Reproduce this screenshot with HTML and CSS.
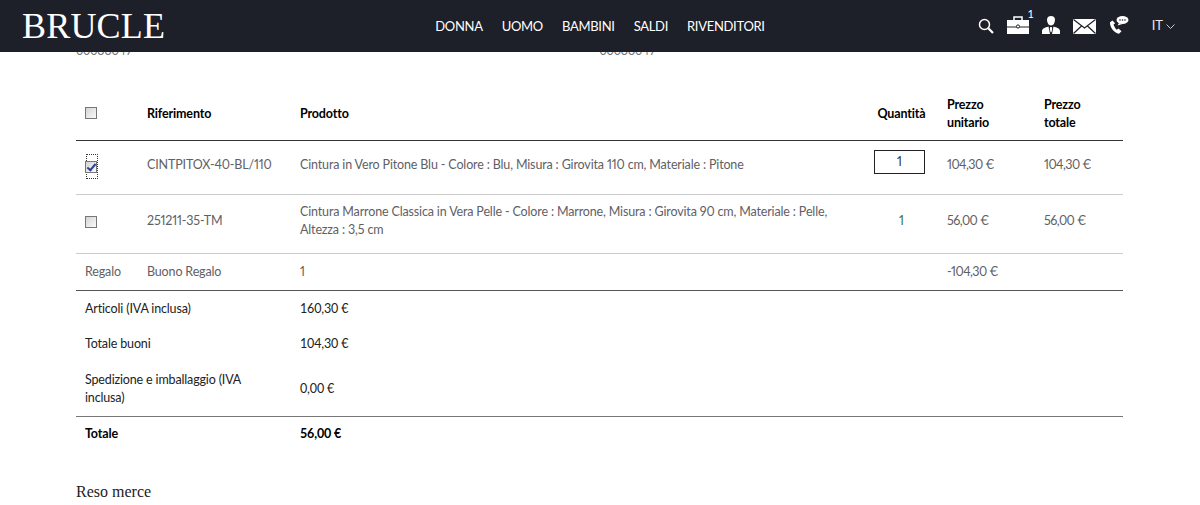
FILE: index.html
```html
<!DOCTYPE html>
<html lang="it">
<head>
    <meta charset="UTF-8">
    <title>Brucle - Ordine</title>
    <link rel="stylesheet" href="styles.css">
</head>
<body>

    <div class="header">
        <a class="logo">BRUCLE</a>
        <div class="nav">
            <a>DONNA</a>
            <a>UOMO</a>
            <a>BAMBINI</a>
            <a>SALDI</a>
            <a>RIVENDITORI</a>
        </div>
        <div class="tools">
            <svg width="16" height="16" viewBox="0 0 16 16"><circle cx="6.5" cy="6.500" r="5" fill="none" stroke="#fff" stroke-width="1.5"/><path d="M10.300 10.300L15 15" stroke="#fff" stroke-width="2.200"/></svg>
            <div class="bag">
                <svg width="22" height="18" viewBox="0 0 22 18"><path d="M7 4V1h8v3" fill="none" stroke="#fff" stroke-width="1.500"/><path d="M0 4h22v6.500H0zM0 11.500h22V18H0z" fill="#fff"/><circle cx="11" cy="10.500" r="1.600" fill="#fff" stroke="#1e2029"/></svg>
                <span class="count">1</span>
            </div>
            <svg width="18" height="18" viewBox="0 0 18 18"><path d="M5 3.500C5 1 7 0 9 0s4 1 4 3.500c0 3-1.500 6-4 6s-4-3-4-6z" fill="#fff"/><path d="M0 18v-3c0-2.500 3-3.500 6.500-4.500L8 18zM18 18v-3c0-2.500-3-3.500-6.500-4.500L10 18zM8.200 11h1.600l.4 1.500-.5 3-.7 1-.7-1-.5-3z" fill="#fff"/></svg>
            <svg width="23" height="15" viewBox="0 0 23 15"><path d="M0 0h23v15H0z" fill="#fff"/><path d="M.5 .6L11.500 9 22.500 .6M.5 14.500L8.500 7M22.500 14.500L14.500 7" fill="none" stroke="#1e2029" stroke-width="1.200"/></svg>
            <svg width="20" height="18" viewBox="0 0 20 18"><path d="M3.500 4.500L1 6.200c-.5 4.500 4 10.800 9 11.500l2.500-2.500-3-2.700-1.800 1.200C6 12 5 10.200 4.500 8.500L6.200 7.300z" fill="#fff"/><ellipse cx="13.500" cy="4" rx="6" ry="4" fill="#fff"/><path d="M10 7l-1.500 2.500L13.500 8z" fill="#fff"/><circle cx="11" cy="4" r=".8" fill="#1e2029"/><circle cx="13.500" cy="4" r=".8" fill="#1e2029"/><circle cx="16" cy="4" r=".8" fill="#1e2029"/></svg>
            <div class="lang">IT <svg width="9" height="5" viewBox="0 0 9 5"><path d="M.5 .5L4.500 4.500 8.500 .5" fill="none" stroke="#ccc"/></svg></div>
        </div>
    </div>

    <div class="container">
        <div class="addresses">
            <div>00033047</div>
            <div>00033047</div>
        </div>

        <table class="order">
            <thead>
                <tr>
                    <th class="col-check"><input type="checkbox"></th>
                    <th class="col-ref">Riferimento</th>
                    <th class="col-prod">Prodotto</th>
                    <th class="col-qty center">Quantità</th>
                    <th class="col-price">Prezzo unitario</th>
                    <th class="col-total">Prezzo totale</th>
                </tr>
            </thead>
            <tbody class="items">
                <tr class="row-one">
                    <td><span class="focus"><input type="checkbox" checked></span></td>
                    <td>CINTPITOX-40-BL/110</td>
                    <td>Cintura in Vero Pitone Blu - Colore : Blu, Misura : Girovita 110 cm, Materiale : Pitone</td>
                    <td><div class="qty-box">1</div></td>
                    <td class="price">104,30 €</td>
                    <td class="price">104,30 €</td>
                </tr>
                <tr class="row-two">
                    <td><input type="checkbox"></td>
                    <td>251211-35-TM</td>
                    <td><div class="prod-text">Cintura Marrone Classica in Vera Pelle - Colore : Marrone, Misura : Girovita 90 cm, Materiale : Pelle, Altezza : 3,5 cm</div></td>
                    <td class="center green">1</td>
                    <td class="price">56,00 €</td>
                    <td class="price">56,00 €</td>
                </tr>
                <tr class="row-gift">
                    <td>Regalo</td>
                    <td>Buono Regalo</td>
                    <td>1</td>
                    <td></td>
                    <td class="price">-104,30 €</td>
                    <td></td>
                </tr>
            </tbody>
            <tbody class="summary">
                <tr>
                    <td colspan="2">Articoli (IVA inclusa)</td>
                    <td colspan="4">160,30 €</td>
                </tr>
                <tr>
                    <td colspan="2">Totale buoni</td>
                    <td colspan="4">104,30 €</td>
                </tr>
                <tr class="sum-ship">
                    <td colspan="2"><div class="ship-label">Spedizione e imballaggio (IVA inclusa)</div></td>
                    <td colspan="4">0,00 €</td>
                </tr>
                <tr class="sum-total">
                    <td colspan="2">Totale</td>
                    <td colspan="4">56,00 €</td>
                </tr>
            </tbody>
        </table>

        <h3 class="returns">Reso merce</h3>
    </div>

</body>
</html>
```

FILE: styles.css
```css
body {
    font-family: Lato, sans-serif;
    font-size: 12.5px;
    letter-spacing: -0.15px;
    line-height: 18px;
    color: #5f6065;
    background-color: #fff;
    margin: 0;
    padding: 0;
    overflow: hidden;
}

.header {
    position: fixed;
    top: 0;
    left: 0;
    right: 0;
    height: 52px;
    background-color: #1e2029;
    color: #fff;
    display: grid;
    grid-template-columns: 1fr auto 1fr;
    align-items: center;
}

.logo {
    font-family: "Liberation Serif", serif;
    font-size: 36px;
    letter-spacing: 0.2px;
    padding-left: 22px;
}

.nav {
    display: flex;
    gap: 19px;
    font-size: 13px;
    letter-spacing: -0.3px;
}

.tools {
    display: flex;
    justify-content: flex-end;
    align-items: flex-end;
    gap: 13px;
    padding: 16px 25px 0 0;
    height: 18px;
    align-self: start;
}

.bag {
    position: relative;
    height: 18px;
}

.bag svg {
    display: block;
}

.count {
    position: absolute;
    top: -11px;
    right: -5px;
    font-size: 11px;
}

.lang {
    font-size: 13px;
    letter-spacing: 0;
    margin-left: 10px;
    color: #e8e8e8;
}

.lang svg {
    vertical-align: 1px;
}

.container {
    width: 1047px;
    margin-left: 76px;
    padding-top: 42px;
}

.addresses {
    display: flex;
}

.addresses div {
    width: 524px;
    color: #777;
}

.order {
    width: 100%;
    border-collapse: collapse;
    table-layout: fixed;
    margin-top: 29px;
}

.col-check { width: 62px; }
.col-ref { width: 153px; }
.col-prod { width: 578px; }
.col-qty { width: 69px; }
.col-price { width: 97px; }
.col-total { width: 88px; }

th, td {
    box-sizing: border-box;
    padding: 0 9px;
    text-align: left;
    font-weight: 400;
}

th {
    height: 51px;
    color: #000;
    font-weight: 700;
    border-bottom: 1px solid #333;
}

th input[type="checkbox"] {
    margin-bottom: 2px;
}

.center,
th.center {
    text-align: center;
    padding-left: 0;
    padding-right: 4px;
}

.items {
    font-variant-numeric: proportional-nums;
}

.price {
    letter-spacing: -0.55px;
}

.row-one td {
    height: 54px;
    padding-bottom: 4px;
    border-bottom: 1px solid #ccc;
}

.row-two td {
    height: 59px;
    padding-bottom: 6px;
    border-bottom: 1px solid #ccc;
}

.row-two input[type="checkbox"] {
    margin-top: 2px;
}

.row-gift td {
    height: 37px;
    border-bottom: 1px solid #555;
}

.prod-text {
    width: 535px;
}

.green {
    color: #3c7040;
}

.row-one .qty-box {
    box-sizing: content-box;
    width: 49px;
    height: 22px;
    line-height: 22px;
    margin: 0 0 6px -4px;
    border: 1px solid #222;
    color: #333;
    text-align: center;
}

.summary td {
    height: 35px;
    padding-top: 2px;
    color: #222;
}

.ship-label {
    width: 180px;
}

.summary .sum-ship td {
    height: 56px;
}

.summary .sum-total td {
    height: 35px;
    padding-top: 0;
    font-weight: 700;
    color: #000;
    border-top: 1px solid #777;
}

input[type="checkbox"] {
    appearance: none;
    display: block;
    position: relative;
    width: 12px;
    height: 12px;
    margin: 0;
    border: 1px solid #777;
    background: linear-gradient(135deg, #d4d4d4, #fafafa);
}

input[type="checkbox"]:checked::after {
    content: "";
    position: absolute;
    left: 3px;
    top: 0;
    width: 3px;
    height: 7px;
    border: solid #2a3f8f;
    border-width: 0 2px 2px 0;
    transform: rotate(40deg);
}

.focus {
    display: block;
    width: 10px;
    padding: 6px 0 5px;
    margin: 2px 0 0 1px;
    border: 1px dotted #333;
    border-radius: 1px;
}

.focus input[type="checkbox"] {
    margin-left: -2px;
}

.returns {
    font-family: "Liberation Serif", serif;
    font-size: 16px;
    font-weight: 400;
    letter-spacing: 0;
    color: #222;
    margin: 32px 0 0;
}
```
